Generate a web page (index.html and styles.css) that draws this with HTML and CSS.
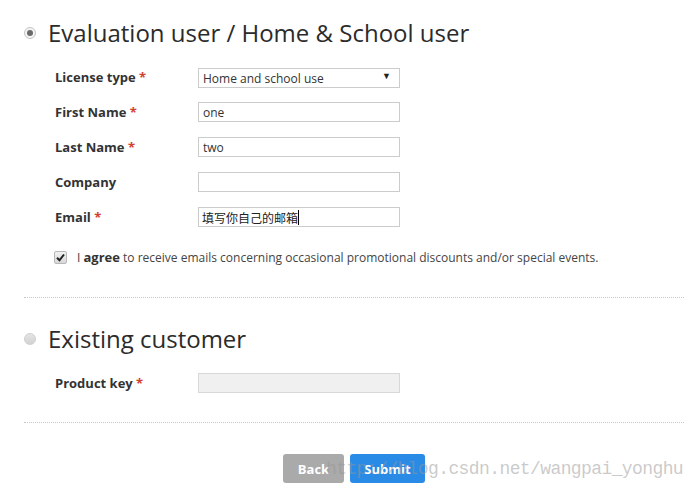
FILE: index.html
```html
<!DOCTYPE html>
<html lang="en">
<head>
    <meta charset="UTF-8">
    <title>Register</title>
    <link rel="stylesheet" href="styles.css">
</head>
<body>

    <div class="page">

        <!-- Evaluation user -->
        <section class="option">
            <div class="option-head">
                <span class="radio checked"></span>
                <h2>Evaluation user / Home &amp; School user</h2>
            </div>

            <div class="form-row">
                <label>License type <span class="req">*</span></label>
                <div class="select-wrap">
                    <select>
                        <option>Home and school use</option>
                    </select>
                </div>
            </div>
            <div class="form-row">
                <label>First Name <span class="req">*</span></label>
                <input type="text" value="one">
            </div>
            <div class="form-row">
                <label>Last Name <span class="req">*</span></label>
                <input type="text" value="two">
            </div>
            <div class="form-row">
                <label>Company</label>
                <input type="text" value="">
            </div>
            <div class="form-row">
                <label>Email <span class="req">*</span></label>
                <div class="field">填写你自己的邮箱<span class="caret"></span></div>
            </div>

            <div class="agree-row">
                <span class="checkbox">
                    <svg width="9" height="9" viewBox="0 0 9 9"><path d="M1 4.8 L3.5 7.3 L8 1.5" fill="none" stroke="#222" stroke-width="2"/></svg>
                </span>
                <p>I <strong>agree</strong> to receive emails concerning occasional promotional discounts and/or special events.</p>
            </div>
        </section>

        <!-- Existing customer -->
        <section class="option">
            <div class="option-head">
                <span class="radio"></span>
                <h2>Existing customer</h2>
            </div>

            <div class="form-row">
                <label>Product key <span class="req">*</span></label>
                <input type="text" class="disabled" value="" disabled>
            </div>
        </section>

        <div class="actions">
            <button class="btn btn-back">Back</button>
            <button class="btn btn-submit">Submit</button>
        </div>

    </div>

    <div class="watermark">http://blog.csdn.net/wangpai_yonghu</div>

</body>
</html>
```

FILE: styles.css
```css
/* Reset */
* {
    margin: 0;
    padding: 0;
    box-sizing: border-box;
}

body {
    background: #fff;
    font-family: 'Open Sans', sans-serif;
    color: #333;
    position: relative;
    height: 498px;
    overflow: hidden;
}

.page {
    padding: 18px 4px 0 24px;
}

/* Sections */
.option {
    border-bottom: 1px dotted #c8c8c8;
}

.option:first-child {
    padding-bottom: 33px;
}

.option + .option {
    padding-top: 26px;
    padding-bottom: 29px;
}

.option-head {
    display: flex;
    align-items: center;
    height: 30px;
    margin-bottom: 19px;
}

.option-head h2 {
    font-size: 24px;
    font-weight: 400;
    color: #2b2b2b;
    line-height: 30px;
}

/* Radio buttons */
.radio {
    width: 12px;
    height: 12px;
    border-radius: 50%;
    margin-right: 12px;
    background: linear-gradient(#e4e4e4, #d2d2d2);
    border: 1px solid #d0d0d0;
    position: relative;
}

.radio.checked {
    background: #f4f4f4;
    border-color: #c4c4c4;
}

.radio.checked::after {
    content: "";
    position: absolute;
    left: 2px;
    top: 2px;
    width: 6px;
    height: 6px;
    border-radius: 50%;
    background: #6a6a6a;
}

/* Form rows */
.form-row {
    display: flex;
    align-items: center;
    height: 20px;
    padding-left: 31px;
}

.form-row + .form-row {
    margin-top: 15px;
}

.form-row label {
    width: 143px;
    font-size: 13px;
    font-weight: 700;
    color: #333;
}

.req {
    color: #d2402e;
}

.form-row input,
.field,
.select-wrap select {
    width: 202px;
    height: 20px;
    border: 1px solid #ccc;
    background: #fff;
    padding: 0 4px;
    font-family: 'Open Sans', sans-serif;
    font-size: 12px;
    color: #333;
    outline: none;
}

.form-row input.disabled {
    background: #f0f0f0;
    border-color: #d8d8d8;
}

.field {
    display: flex;
    align-items: center;
    font-family: 'Noto Sans CJK SC', sans-serif;
    padding-left: 3px;
    color: #222;
}

.caret {
    display: inline-block;
    width: 1px;
    height: 15px;
    background: #000;
}

/* Select */
.select-wrap {
    position: relative;
}

.select-wrap select {
    appearance: none;
    -webkit-appearance: none;
}

.select-wrap::after {
    content: "▼";
    position: absolute;
    right: 9px;
    top: 3px;
    font-size: 9px;
    color: #222;
    pointer-events: none;
}

/* Agree checkbox */
.agree-row {
    display: flex;
    align-items: center;
    height: 14px;
    padding-left: 30px;
    margin-top: 23px;
}

.checkbox {
    width: 13px;
    height: 13px;
    border: 1px solid #b8b8b8;
    border-radius: 2px;
    background: linear-gradient(#f2f2f2, #d8d8d8);
    display: flex;
    justify-content: center;
    align-items: center;
    margin-right: 10px;
}

.agree-row p {
    font-size: 12px;
    color: #444;
}

.agree-row strong {
    font-weight: 700;
    font-size: 13px;
    color: #333;
}

/* Buttons */
.actions {
    display: flex;
    justify-content: center;
    gap: 6px;
    padding-top: 31px;
}

.btn {
    height: 29px;
    border: none;
    border-radius: 3px;
    color: #fff;
    font-family: 'Open Sans', sans-serif;
    font-size: 13px;
    font-weight: 700;
}

.btn-back {
    width: 61px;
    background: #aaa;
}

.btn-submit {
    width: 75px;
    background: #2a8be6;
}

/* Blog watermark */
.watermark {
    position: absolute;
    left: 326px;
    top: 459px;
    font-family: 'Liberation Mono', monospace;
    font-size: 18px;
    letter-spacing: -0.6px;
    color: rgba(150, 150, 150, 0.5);
    pointer-events: none;
}
```
